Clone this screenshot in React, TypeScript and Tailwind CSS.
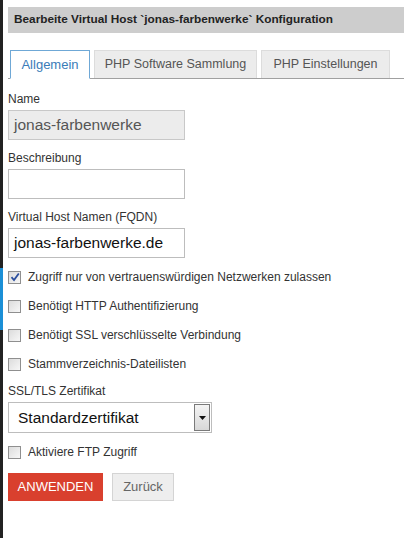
import { ReactNode } from "react";

function Check({ checked, label }: { checked?: boolean; label: string }) {
  return (
    <label className="flex h-[16px] items-center gap-[7px] whitespace-nowrap text-[12px] text-[#333]">
      <span className="flex h-[13px] w-[13px] items-center justify-center border border-[#8f8f8f] bg-gradient-to-br from-[#dcdcdc] to-[#f7f7f7]">
        {checked && (
          <svg width="10" height="10" viewBox="0 0 10 10">
            <path d="M1.5 5.2 L4 8 L8.8 1.5" fill="none" stroke="#2c4f9e" strokeWidth="1.8" />
          </svg>
        )}
      </span>
      <span>{label}</span>
    </label>
  );
}

function Field({ label, children }: { label: string; children: ReactNode }) {
  return (
    <div className="flex flex-col">
      <span className="whitespace-nowrap text-[12px] leading-[15px] text-[#333]">{label}</span>
      <div className="mt-[3px]">{children}</div>
    </div>
  );
}

export default function App() {
  const tabs = [
    { t: "Allgemein", w: "w-[80px]" },
    { t: "PHP Software Sammlung", w: "w-[163px]" },
    { t: "PHP Einstellungen", w: "w-[129px]" },
  ];
  return (
    <div className="relative h-[538px] w-[404px] bg-white font-['Liberation_Sans',Arial,sans-serif]">
      <div className="absolute left-0 top-0 h-full w-[3px] bg-[#222]">
        <div className="mt-[268px] h-[62px] w-full bg-[#1b8fd6]" />
      </div>
      <div className="pl-[8px] pt-[7px]">
        <div className="flex h-[26px] items-center whitespace-nowrap bg-[#cdcdcd] pl-[6px] text-[11.8px] font-bold text-[#222]">
          Bearbeite Virtual Host `jonas-farbenwerke` Konfiguration
        </div>

        <div className="mt-[17px] flex h-[29px] items-end border-b border-[#a0a0a0] pl-[2px]">
          {tabs.map(({ t, w }, i) =>
            i === 0 ? (
              <div
                key={t}
                className={`-mb-px flex h-[29px] ${w} items-center justify-center whitespace-nowrap border border-[#6fa8d6] border-b-white bg-white text-[13px] text-[#3a7cb8]`}
              >
                {t}
              </div>
            ) : (
              <div
                key={t}
                className={`ml-[4px] flex h-[28px] ${w} items-center justify-center whitespace-nowrap border border-b-0 border-[#dcdcdc] bg-[#ececec] text-[12.5px] text-[#555]`}
              >
                {t}
              </div>
            )
          )}
        </div>

        <div className="mt-[13px] flex flex-col gap-[11px]">
          <Field label="Name">
            <div className="flex h-[30px] w-[177px] items-center whitespace-nowrap border border-[#c8c8c8] bg-[#ececec] pl-[5px] text-[15.5px] text-[#555]">
              jonas-farbenwerke
            </div>
          </Field>
          <Field label="Beschreibung">
            <div className="h-[30px] w-[177px] border border-[#bdbdbd] bg-white" />
          </Field>
          <Field label="Virtual Host Namen (FQDN)">
            <div className="flex h-[30px] w-[177px] items-center whitespace-nowrap border border-[#bdbdbd] bg-white pl-[5px] text-[15.5px] text-[#111]">
              jonas-farbenwerke.de
            </div>
          </Field>
        </div>

        <div className="mt-[11px] flex flex-col gap-[13px]">
          <Check checked label="Zugriff nur von vertrauenswürdigen Netzwerken zulassen" />
          <Check label="Benötigt HTTP Authentifizierung" />
          <Check label="Benötigt SSL verschlüsselte Verbindung" />
          <Check label="Stammverzeichnis-Dateilisten" />
        </div>

        <div className="mt-[12px]">
          <Field label="SSL/TLS Zertifikat">
            <div className="flex h-[31px] w-[204px] items-stretch border border-[#bdbdbd] bg-white">
              <div className="flex flex-1 items-center whitespace-nowrap pl-[9px] text-[15.5px] text-[#111]">Standardzertifikat</div>
              <div className="m-[1px] flex w-[16px] items-center justify-center border border-[#7a7a7a] bg-gradient-to-b from-[#f4f4f4] to-[#d8d8d8]">
                <svg width="7" height="4" viewBox="0 0 7 4">
                  <path d="M0 0 H7 L3.5 4 Z" fill="#111" />
                </svg>
              </div>
            </div>
          </Field>
        </div>

        <div className="mt-[11px]">
          <Check label="Aktiviere FTP Zugriff" />
        </div>

        <div className="mt-[13px] flex gap-[9px]">
          <button className="flex h-[28px] w-[95px] items-center justify-center bg-[#d9402e] text-[13px] text-white">
            ANWENDEN
          </button>
          <button className="flex h-[28px] w-[62px] items-center justify-center border border-[#d4d4d4] bg-[#eeeeee] text-[13px] text-[#666]">
            Zurück
          </button>
        </div>
      </div>
    </div>
  );
}
